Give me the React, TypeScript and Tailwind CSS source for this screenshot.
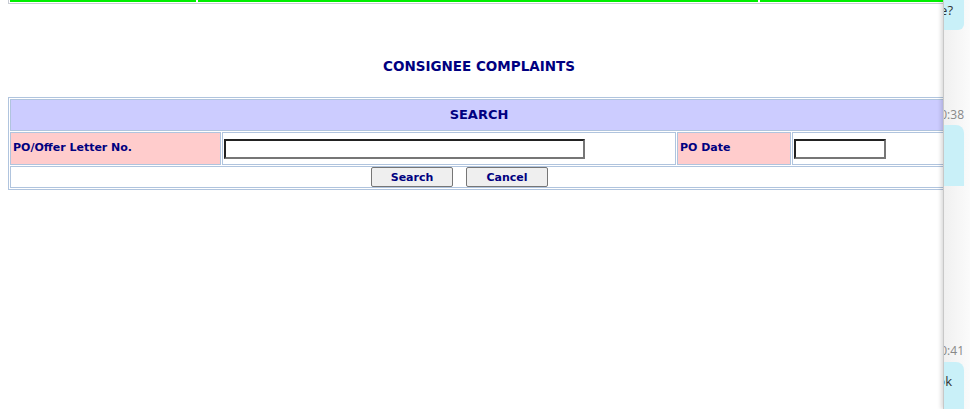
import React from "react";

const font = { fontFamily: 'Verdana, "DejaVu Sans", sans-serif' };

function Btn({ label }: { label: string }) {
  return (
    <button className="w-[82px] h-[20px] bg-[#efefef] border border-[#767676] rounded-[2px] text-[11px] font-bold text-[#000080] leading-none">
      {label}
    </button>
  );
}

export default function App() {
  return (
    <div className="relative w-[970px] h-[409px] overflow-hidden bg-white" style={font}>
      {/* bottom of previous table */}
      <div className="ml-[8px] w-[950px] flex gap-[2px] px-[1px] pb-[1px] border-x border-b border-[#c8ccd4]">
        <div className="w-[186px] h-[2px] bg-[#00ee00]" />
        <div className="w-[560px] h-[2px] bg-[#00ee00]" />
        <div className="flex-1 h-[2px] bg-[#00ee00]" />
      </div>

      <div className="mt-[54px] w-[958px] text-center text-[13.5px] font-bold text-[#000080] leading-[16px]">
        CONSIGNEE COMPLAINTS
      </div>

      <div className="mt-[23px] ml-[8px] w-[942px] border border-[#b0c4de] p-[1px] flex flex-col gap-[1px]">
        <div className="h-[32px] bg-[#ccccff] border border-[#b0c4de] flex items-center justify-center text-[13px] font-bold text-[#000080]">
          SEARCH
        </div>
        <div className="grid grid-cols-[211px_454px_114px_1fr] gap-[1px] h-[33px]">
          <div className="bg-[#ffcccc] border border-[#b0c4de] flex items-center pl-[2px] text-[11px] font-bold text-[#000080]">
            PO/Offer Letter No.
          </div>
          <div className="border border-[#b0c4de] flex items-center pl-[1px]">
            <div className="w-[361px] h-[20px] border-2 border-t-[#222] border-l-[#222] border-b-[#767676] border-r-[#767676] bg-white" />
          </div>
          <div className="bg-[#ffcccc] border border-[#b0c4de] flex items-center pl-[2px] text-[11px] font-bold text-[#000080]">
            PO Date
          </div>
          <div className="border border-[#b0c4de] flex items-center pl-[1px]">
            <div className="w-[92px] h-[20px] border-2 border-t-[#222] border-l-[#222] border-b-[#767676] border-r-[#767676] bg-white" />
          </div>
        </div>
        <div className="h-[22px] border border-[#b0c4de] flex items-center justify-center gap-[13px] pr-[39px]">
          <Btn label="Search" />
          <Btn label="Cancel" />
        </div>
      </div>

      {/* chat overlay on the right */}
      <div
        className="absolute top-0 left-[943px] w-[27px] h-[409px] overflow-hidden border-l border-[#c8c8c8] bg-gradient-to-r from-[#f0f0f0] to-[#fbfbfb] shadow-[-2px_0_4px_rgba(0,0,0,0.15)]"
        style={{ fontFamily: '"Open Sans", "Noto Sans", sans-serif' }}
      >
        <div className="absolute top-0 left-0 w-[20px] h-[30px] bg-[#c9f0f8] rounded-br-[6px]" />
        <div className="absolute top-[1px] right-[17px] text-[13px] text-[#333] whitespace-nowrap leading-[18px]">time?</div>

        <div className="absolute top-[107px] right-[6px] text-[12px] text-[#888] whitespace-nowrap leading-[16px]">10:38</div>
        <div className="absolute top-[125px] left-0 w-[20px] h-[61px] bg-[#c9f0f8] rounded-tr-[8px]" />

        <div className="absolute top-[343px] right-[6px] text-[12px] text-[#888] whitespace-nowrap leading-[16px]">10:41</div>
        <div className="absolute top-[362px] left-0 w-[20px] h-[50px] bg-[#c9f0f8] rounded-tr-[8px]" />
        <div className="absolute top-[372px] right-[18px] text-[13px] text-[#333] whitespace-nowrap leading-[18px]">ok</div>
      </div>
    </div>
  );
}
